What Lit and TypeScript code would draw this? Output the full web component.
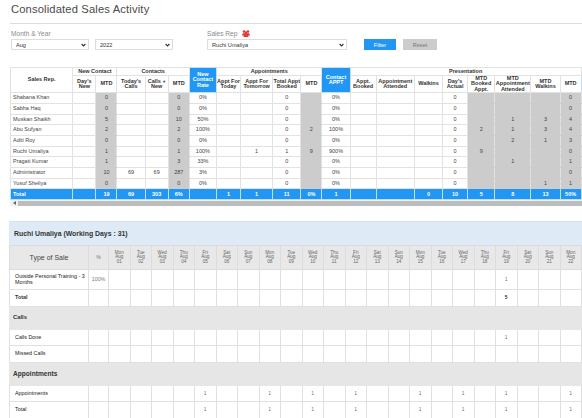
import { LitElement, html, css, nothing } from "lit";
import { customElement } from "lit/decorators.js";

type Row = (string | number | null)[];
const _ = null;
// name, dayNew, mtd, today, callsNew, mtd2, rate, apptToday, tomorrow, total, mtd3, contact, booked, attended, walkins, actual, mBooked, mAtt, mWalk, mtd4
const rows: Row[] = [
  ["Shabana Khan", _, 0, _, _, 0, "0%", _, _, 0, _, "0%", _, _, _, 0, _, _, _, 0],
  ["Sabha Haq", _, 0, _, _, 0, "0%", _, _, 0, _, "0%", _, _, _, 0, _, _, _, 0],
  ["Muskan Shaikh", _, 5, _, _, 10, "50%", _, _, 0, _, "0%", _, _, _, 0, _, 1, 3, 4],
  ["Abu Sufyan", _, 2, _, _, 2, "100%", _, _, 0, 2, "100%", _, _, _, 0, 2, 1, 3, 4],
  ["Aditi Roy", _, 0, _, _, 0, "0%", _, _, 0, _, "0%", _, _, _, 0, _, 2, 1, 3],
  ["Ruchi Umaliya", _, 1, _, _, 1, "100%", _, 1, 1, 9, "900%", _, _, _, 0, 9, _, _, 0],
  ["Pragati Kumar", _, 1, _, _, 3, "33%", _, _, 0, _, "0%", _, _, _, 0, _, 1, _, 1],
  ["Administrator", _, 10, 69, 69, 287, "3%", _, _, 0, _, "0%", _, _, _, 0, _, _, _, 0],
  ["Yusuf Sheliya", _, 0, _, _, 0, "0%", _, _, 0, _, "0%", _, _, _, 0, _, _, 1, 1],
];
const totals: Row = ["Total", _, 19, 69, 303, "6%", _, 1, 1, 11, "0%", 1, _, _, 0, 10, 5, 8, 13, "50%"];
const topWidths = [62, 23, 21, 28, 23, 21, 27, 24, 32, 28, 21, 28, 26, 38, 28, 25, 27, 36, 29, 21, 30];
const greyCols = new Set([2, 5, 10, 16, 17, 18, 19]);

const days = ["Mon","Tue","Wed","Thu","Fri","Sat","Sun","Mon","Tue","Wed","Thu","Fri","Sat","Sun","Mon","Tue","Wed","Thu","Fri","Sat","Sun","Mon"];
const dayIdx = days.map((_d, i) => i);
const apptDays = new Set([4, 7, 9, 11, 14, 16, 18, 21]);
const only = (s: Set<number>, v: string) => dayIdx.map((i) => (s.has(i) ? v : ""));
const none = dayIdx.map(() => "");

@customElement("app-root")
export class AppRoot extends LitElement {
  static styles = css`
    :host {
      display: block;
      width: 582px;
      height: 418px;
      overflow: hidden;
      background: #fff;
      font-family: "Liberation Sans", Arial, sans-serif;
      color: #333;
    }
    .title {
      margin: 0 0 0 10px;
      padding: 3px 0 0 1px;
      height: 24px;
      box-sizing: border-box;
      font-size: 11.2px;
      line-height: 13px;
      font-weight: 400;
      letter-spacing: 0.15px;
      color: #4a4a4a;
      border-bottom: 1px solid #ddd;
    }
    .filters {
      display: flex;
      align-items: flex-end;
      padding: 4px 0 0 11px;
      height: 26px;
      box-sizing: border-box;
    }
    .field { display: flex; flex-direction: column; }
    .label {
      display: flex;
      align-items: center;
      gap: 5px;
      height: 11px;
      font-size: 6.6px;
      color: #8a8a8a;
    }
    select {
      appearance: none;
      height: 11px;
      box-sizing: border-box;
      border: 1px solid #ddd;
      border-radius: 0;
      background: #fff url("data:image/svg+xml,%3Csvg xmlns='http://www.w3.org/2000/svg' width='5' height='4' viewBox='0 0 5 4'%3E%3Cpath d='M.6 1l1.9 2L4.4 1' fill='none' stroke='%23333' stroke-width='1.1'/%3E%3C/svg%3E") no-repeat right 2px center;
      padding: 0 0 0 4px;
      margin: 0;
      font: 5.6px "Liberation Sans", Arial, sans-serif;
      color: #333;
    }
    .w78 { width: 78px; }
    .w140 { width: 140px; }
    .pair { display: flex; gap: 6px; margin-right: 34px; }
    .btn {
      height: 11px;
      border: 0;
      padding: 0;
      margin: 0;
      font: 5.6px "Liberation Sans", Arial, sans-serif;
    }
    .filter { width: 32px; margin-left: 17px; background: #2196f3; color: #fff; }
    .reset { width: 34px; margin-left: 7px; background: #ccc; color: #777; }

    .wrap { margin: 17px 0 0 10px; overflow: hidden; }
    table { border-collapse: collapse; table-layout: fixed; }
    .top { width: 602px; font-size: 5.5px; line-height: 5.4px; }
    .top td, .top th {
      border: 1px solid #e2e2e2;
      padding: 0;
      text-align: center;
      color: #444;
      font-weight: 400;
      overflow: hidden;
    }
    .top th { font-weight: 700; color: #333; }
    .top .h1 { height: 8px; }
    .top .h2 { height: 14px; }
    .top tbody tr { height: 10.7px; }
    .top td.name { text-align: left; padding-left: 2px; }
    .top td.g { background: #ccc; border-top-color: #ccc; border-bottom-color: #ccc; }
    .top th.blue, .top .tot td {
      background: #2196f3;
      color: #fff;
      font-weight: 700;
      border-color: #bfdffa;
    }
    .top td.edge { background: #fff; }
    .scroll {
      display: flex;
      align-items: center;
      width: 572px;
      height: 6px;
      background: #f1f1f1;
    }
    .arrow { flex: 0 0 8px; display: flex; justify-content: center; }
    .thumb { flex: 1 1 auto; height: 5px; background: #bdbdbd; }

    .panel { margin: 15px 0 0 9px; overflow: hidden; }
    .phead {
      height: 24px;
      display: flex;
      align-items: center;
      padding-left: 5px;
      background: #deeaf6;
      border-top: 1px solid #d8e2ee;
      box-sizing: border-box;
      font-size: 6.9px;
      font-weight: 700;
      color: #333;
    }
    .low { width: 572px; font-size: 5px; line-height: 5.2px; }
    .low td, .low th {
      border: 1px solid #e0e0e0;
      padding: 0;
      text-align: center;
      color: #777;
      font-weight: 400;
      overflow: hidden;
    }
    .low thead th { background: #e8e8e8; height: 23px; border-color: #dcdcdc; }
    .low .type { font-size: 7px; line-height: 8px; color: #444; }
    .low .pct { font-size: 5.2px; }
    .low .day { font-size: 4.6px; line-height: 4.5px; color: #666; }
    .low td.lab { text-align: left; padding: 0 3px 0 5px; font-size: 5.4px; color: #222; }
    .low .r1 { height: 20px; }
    .low .r2 { height: 16.5px; }
    .low .rt td { font-weight: 700; color: #333; }
    .low td.sec {
      height: 22px;
      background: #e6e6e6;
      text-align: left;
      padding-left: 3px;
      font-weight: 700;
      color: #333;
      font-size: 5.8px;
      border-color: #e6e6e6;
    }
    .low td.sec.big { font-size: 6.6px; }
  `;

  private cell(v: string | number | null, i: number) {
    const cls = i === 0 ? "name" : greyCols.has(i) ? "g" : "";
    return html`<td class=${cls}>${v ?? nothing}</td>`;
  }

  private top() {
    return html`<table class="top">
      <colgroup>${topWidths.map((w) => html`<col style="width:${w}px" />`)}</colgroup>
      <thead>
        <tr class="h1">
          <th rowspan="2">Sales Rep.</th>
          <th colspan="2">New Contact</th>
          <th colspan="3">Contacts</th>
          <th rowspan="2" class="blue">New Contact Rate</th>
          <th colspan="4">Appointments</th>
          <th rowspan="2" class="blue">Contact APPT</th>
          <th colspan="8">Presentation</th>
          <th rowspan="2" class="blue"></th>
        </tr>
        <tr class="h2">
          ${["Day's New", "MTD", "Today's Calls", "Calls + New", "MTD", "Appt For Today", "Appt For Tomorrow", "Total Appt Booked", "MTD", "Appt. Booked", "Appointment Attended", "Walkins", "Day's Actual", "MTD Booked Appt.", "MTD Appointment Attended", "MTD Walkins", "MTD"].map((t) => html`<th>${t}</th>`)}
        </tr>
      </thead>
      <tbody>
        ${rows.map((r) => html`<tr>${r.map((v, i) => this.cell(v, i))}<td class="edge"></td></tr>`)}
        <tr class="tot">${totals.map((v, i) => html`<td class=${i === 0 ? "name" : ""}>${v ?? nothing}</td>`)}<td></td></tr>
      </tbody>
    </table>`;
  }

  private line(label: string, pct: string, vals: string[], cls: string) {
    return html`<tr class=${cls}>
      <td class="lab">${label}</td>
      <td class="pct">${pct}</td>
      ${vals.map((v) => html`<td>${v}</td>`)}
    </tr>`;
  }

  private lower() {
    return html`<table class="low">
      <colgroup>
        <col style="width:79px" /><col style="width:20px" />
        ${dayIdx.map(() => html`<col style="width:21.5px" />`)}
      </colgroup>
      <thead>
        <tr>
          <th class="type">Type of Sale</th>
          <th class="pct">%</th>
          ${days.map((d, i) => html`<th class="day">${d}<br />Aug<br />${String(i + 1).padStart(2, "0")}</th>`)}
        </tr>
      </thead>
      <tbody>
        ${this.line("Outside Personal Training - 3 Months", "100%", only(new Set([18]), "1"), "r1")}
        ${this.line("Total", "", only(new Set([18]), "5"), "r2 rt")}
        <tr><td class="sec" colspan="24">Calls</td></tr>
        ${this.line("Calls Done", "", only(new Set([18]), "1"), "r2")}
        ${this.line("Missed Calls", "", none, "r2")}
        <tr><td class="sec big" colspan="24">Appointments</td></tr>
        ${this.line("Appointments", "", only(apptDays, "1"), "r2")}
        ${this.line("Total", "", only(apptDays, "1"), "r2")}
      </tbody>
    </table>`;
  }

  render() {
    return html`
      <h1 class="title">Consolidated Sales Activity</h1>
      <div class="filters">
        <div class="field">
          <div class="label">Month &amp; Year</div>
          <div class="pair">
            <select class="w78"><option>Aug</option></select>
            <select class="w78"><option>2022</option></select>
          </div>
        </div>
        <div class="field">
          <div class="label">
            Sales Rep
            <svg width="8" height="7" viewBox="0 0 16 14" fill="#e53935">
              <circle cx="4" cy="3" r="2.6" /><circle cx="12" cy="3" r="2.6" /><circle cx="8" cy="5.5" r="2.8" />
              <path d="M0 11c0-3 2-5 4-5s4 2 4 5zM8 11c0-3 2-5 4-5s4 2 4 5z" />
              <path d="M3 14c0-3.5 2.2-6 5-6s5 2.5 5 6z" />
            </svg>
          </div>
          <select class="w140"><option>Ruchi Umaliya</option></select>
        </div>
        <button class="btn filter">Filter</button>
        <button class="btn reset">Reset</button>
      </div>
      <div class="wrap">
        ${this.top()}
        <div class="scroll">
          <div class="arrow"><svg width="3" height="4" viewBox="0 0 3 4"><path d="M3 0v4L0 2z" fill="#666" /></svg></div>
          <div class="thumb"></div>
        </div>
      </div>
      <div class="panel">
        <div class="phead">Ruchi Umaliya (Working Days : 31)</div>
        ${this.lower()}
      </div>
    `;
  }
}
